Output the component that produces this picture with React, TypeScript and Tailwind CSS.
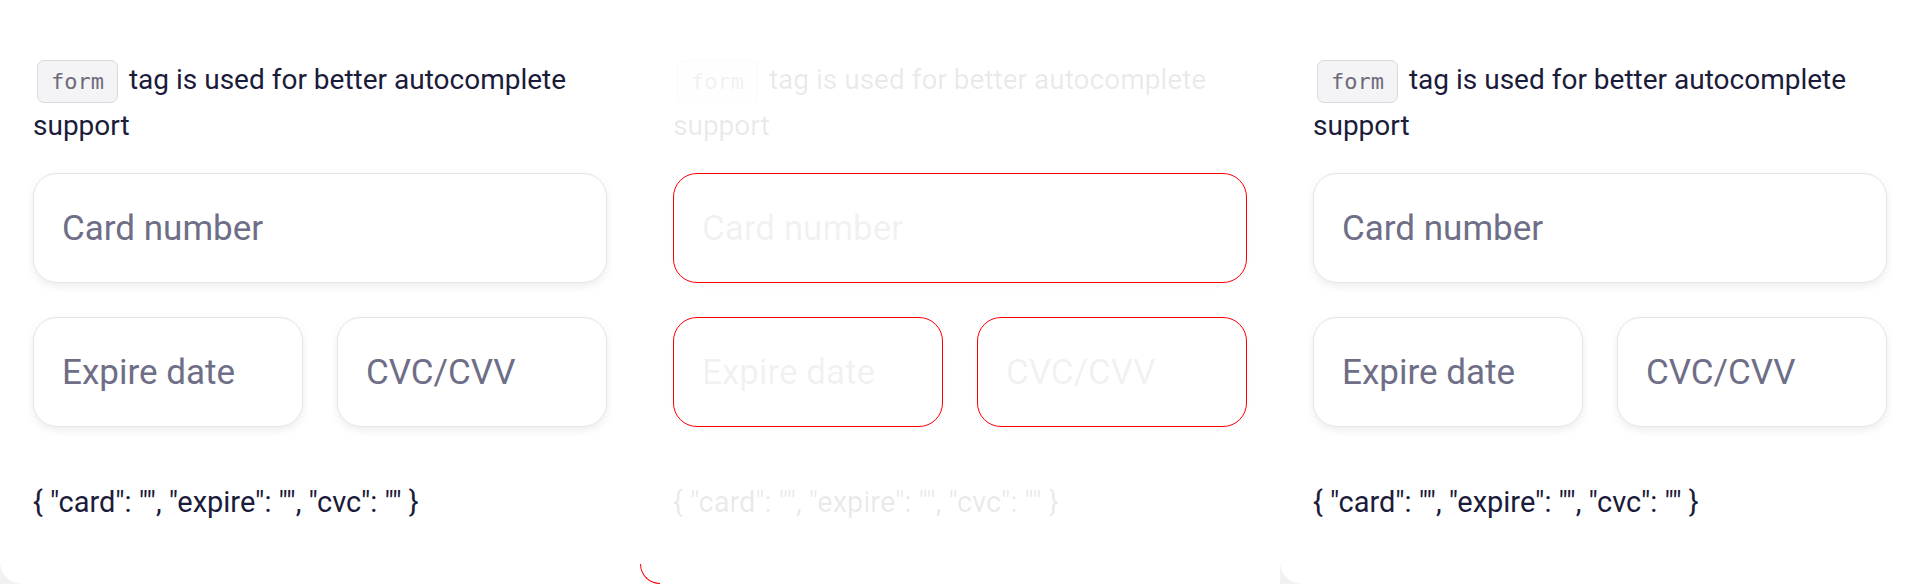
import React from "react";

type Variant = "normal" | "debug";

function CardForm({ variant }: { variant: Variant }) {
  const debug = variant === "debug";

  const textColor = debug ? "text-[#1b1b3a]/10" : "text-[#1b1b3a]";
  const inputBase =
    "w-full h-[110px] rounded-[24px] bg-white pl-7 pr-6 text-[35px] outline-none font-['Roboto',sans-serif]";
  const inputSkin = debug
    ? "border border-[#ff0000] shadow-[0_3px_8px_rgba(0,0,0,0.02)] placeholder:text-[#6e6e87]/10"
    : "border border-[#e6e6ea] shadow-[0_3px_8px_rgba(0,0,0,0.08)] placeholder:text-[#6e6e87]";

  return (
    <form
      className="flex flex-col px-[33px] pt-[57px]"
      onSubmit={(e) => e.preventDefault()}
    >
      {/* note about the form tag */}
      <p className={`text-[28px] leading-[1.62] font-['Roboto',sans-serif] ${textColor}`}>
        <code
          className={`mx-1 inline-block h-[43px] rounded-[7px] border px-[13px] align-middle text-[22px] leading-[41px] font-['DejaVu_Sans_Mono',monospace] ${
            debug
              ? "border-[#d9d9de]/10 bg-[#f4f4f6]/10 text-[#6b6b7b]/10"
              : "border-[#d9d9de] bg-[#f4f4f6] text-[#6b6b7b]"
          }`}
        >
          form
        </code>{" "}
        tag is used for better autocomplete support
      </p>

      <input
        className={`mt-[25px] ${inputBase} ${inputSkin}`}
        placeholder="Card number"
        autoComplete="cc-number"
      />

      <div className="mt-[34px] grid grid-cols-2 gap-[34px]">
        <input className={`${inputBase} ${inputSkin}`} placeholder="Expire date" autoComplete="cc-exp" />
        <input className={`${inputBase} ${inputSkin}`} placeholder="CVC/CVV" autoComplete="cc-csc" />
      </div>

      <p className={`mt-[54px] text-[29px] leading-[1.5] font-['Roboto',sans-serif] ${textColor}`}>
        {'{ "card": "", "expire": "", "cvc": "" }'}
      </p>
    </form>
  );
}

export default function App() {
  return (
    <div className="flex h-[584px] w-[1920px] overflow-hidden bg-[#f1f1f1]">
      {/* ── Panel 1 ── */}
      <div className="h-[584px] w-[640px] rounded-bl-[22px] bg-white">
        <CardForm variant="normal" />
      </div>

      {/* ── Panel 2 (outlined) ── */}
      <div className="bg-white">
        <div className="relative h-[584px] w-[640px] rounded-bl-[20px] bg-white">
          <CardForm variant="debug" />
          <div className="absolute bottom-0 left-0 h-[20px] w-[20px] rounded-bl-[20px] border-b border-l border-[#ff0000]" />
        </div>
      </div>

      {/* ── Panel 3 ── */}
      <div className="h-[584px] w-[640px] rounded-bl-[22px] bg-white">
        <CardForm variant="normal" />
      </div>
    </div>
  );
}
